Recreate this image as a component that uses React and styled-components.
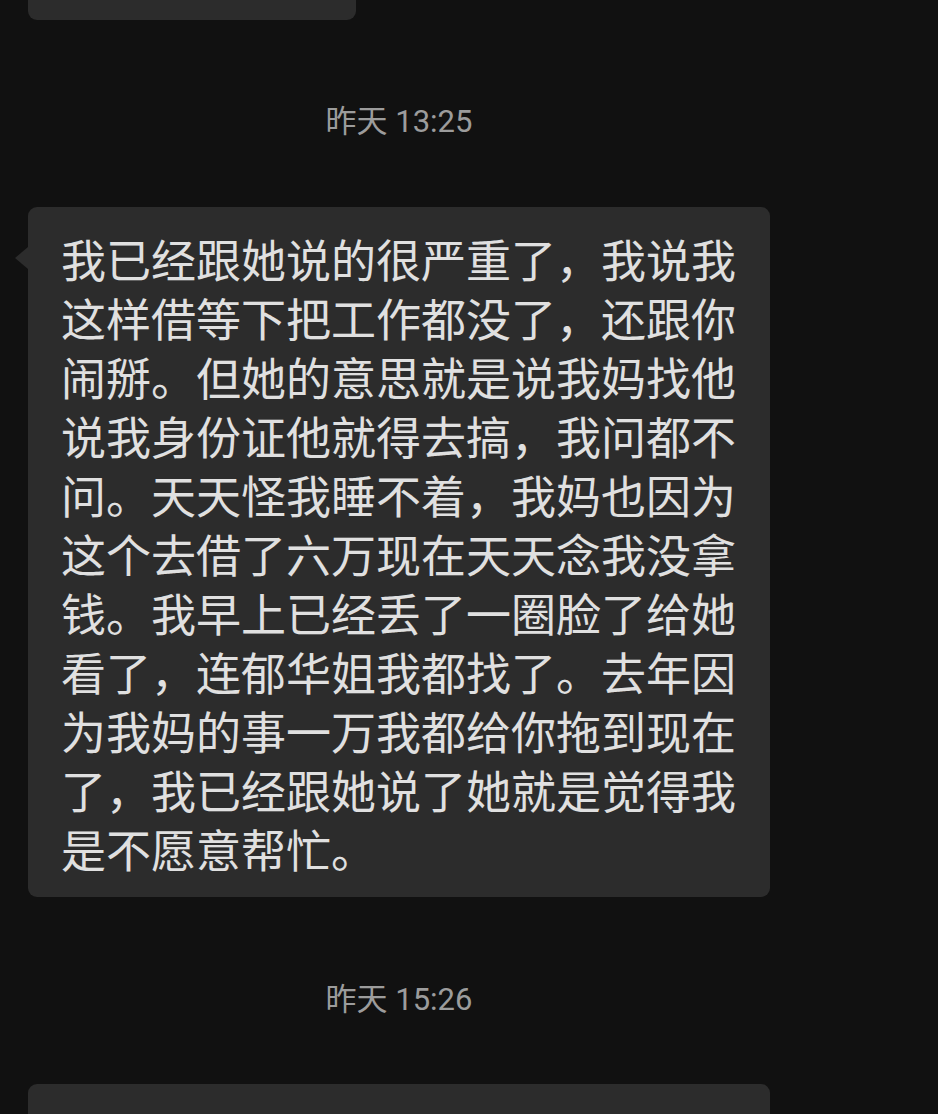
import React from "react";
import styled, { createGlobalStyle } from "styled-components";

const Global = createGlobalStyle`
  html, body { margin: 0; padding: 0; background: #111111; overflow: hidden; }
  body { font-family: "Roboto", "Noto Sans CJK SC", sans-serif; }
`;

const Page = styled.div`
  width: 938px;
  height: 1114px;
  background: #111111;
  overflow: hidden;
`;

const Column = styled.div`
  width: 742px;
  margin-left: 28px;
  display: flex;
  flex-direction: column;
  align-items: flex-start;
`;

const Bubble = styled.div`
  position: relative;
  box-sizing: border-box;
  background: #2c2c2c;
  border-radius: ${(p) => (p.$cut === "top" ? "0 0 9px 9px" : p.$cut === "bottom" ? "9px 9px 0 0" : "9px")};
  width: ${(p) => p.$width || "742px"};
  height: ${(p) => p.$height || "auto"};
  padding: ${(p) => (p.$text ? "22px 30px 19px 33px" : "0")};
  color: #e0e0e0;
  font-family: "Noto Sans CJK SC", sans-serif;
  font-size: 45px;
  line-height: 59px;
  ${(p) =>
    p.$tail &&
    `
    &::before {
      content: "";
      position: absolute;
      left: -13px;
      top: 40px;
      width: 0;
      height: 0;
      border-top: 11px solid transparent;
      border-bottom: 11px solid transparent;
      border-right: 13px solid #2c2c2c;
    }
  `}
`;

const Stamp = styled.div`
  align-self: stretch;
  text-align: center;
  color: #9c9c9c;
  font-family: "Roboto", "Noto Sans CJK SC", sans-serif;
  font-size: 31px;
  line-height: 40px;
  margin: ${(p) => p.$margin};
`;

export default function App() {
  return (
    <Page>
      <Global />
      <Column>
        <Bubble $cut="top" $width="328px" $height="20px" />
        <Stamp $margin="82px 0 65px">昨天 13:25</Stamp>
        <Bubble $text $tail>
          我已经跟她说的很严重了，我说我这样借等下把工作都没了，还跟你闹掰。但她的意思就是说我妈找他说我身份证他就得去搞，我问都不问。天天怪我睡不着，我妈也因为这个去借了六万现在天天念我没拿钱。我早上已经丢了一圈脸了给她看了，连郁华姐我都找了。去年因为我妈的事一万我都给你拖到现在了，我已经跟她说了她就是觉得我是不愿意帮忙。
        </Bubble>
        <Stamp $margin="83px 0 64px">昨天 15:26</Stamp>
        <Bubble $cut="bottom" $height="40px" />
      </Column>
    </Page>
  );
}
